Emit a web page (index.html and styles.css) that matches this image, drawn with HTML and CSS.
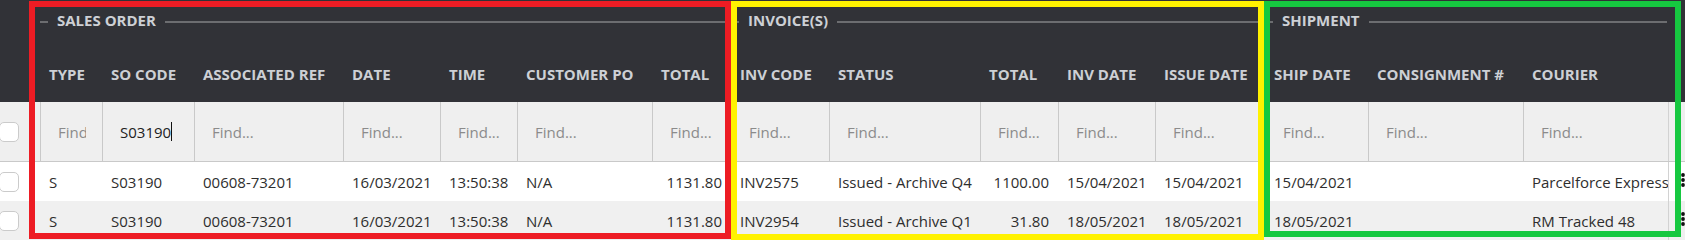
FILE: index.html
```html
<!DOCTYPE html>
<html lang="en">
<head>
<meta charset="utf-8">
<title>Orders grid</title>
<link rel="stylesheet" href="styles.css">
</head>
<body>
<div class="table">
  <div class="head">
    <div class="row groups">
      <div class="group g-sales"><span class="rule-s"></span><span class="gt">SALES ORDER</span><span class="rule"></span></div>
      <div class="group g-inv"><span class="rule-s"></span><span class="gt">INVOICE(S)</span><span class="rule"></span></div>
      <div class="group g-ship"><span class="rule-s"></span><span class="gt">SHIPMENT</span><span class="rule"></span></div>
    </div>
    <div class="row cols">
      <div class="th"></div>
      <div class="th">TYPE</div>
      <div class="th">SO CODE</div>
      <div class="th">ASSOCIATED REF</div>
      <div class="th">DATE</div>
      <div class="th">TIME</div>
      <div class="th">CUSTOMER PO</div>
      <div class="th">TOTAL</div>
      <div class="th">INV CODE</div>
      <div class="th">STATUS</div>
      <div class="th">TOTAL</div>
      <div class="th">INV DATE</div>
      <div class="th">ISSUE DATE</div>
      <div class="th">SHIP DATE</div>
      <div class="th">CONSIGNMENT #</div>
      <div class="th">COURIER</div>
      <div class="th"></div>
    </div>
  </div>
  <div class="row filters">
    <div class="fc first"><span class="chk"></span></div>
    <div class="fc"><input class="find" placeholder="Find..."></div>
    <div class="fc typing"><input class="find" value="S03190"><span class="caret"></span></div>
    <div class="fc"><input class="find" placeholder="Find..."></div>
    <div class="fc"><input class="find" placeholder="Find..."></div>
    <div class="fc"><input class="find" placeholder="Find..."></div>
    <div class="fc"><input class="find" placeholder="Find..."></div>
    <div class="fc"><input class="find" placeholder="Find..."></div>
    <div class="fc"><input class="find" placeholder="Find..."></div>
    <div class="fc"><input class="find" placeholder="Find..."></div>
    <div class="fc"><input class="find" placeholder="Find..."></div>
    <div class="fc"><input class="find" placeholder="Find..."></div>
    <div class="fc"><input class="find" placeholder="Find..."></div>
    <div class="fc"><input class="find" placeholder="Find..."></div>
    <div class="fc"><input class="find" placeholder="Find..."></div>
    <div class="fc"><input class="find" placeholder="Find..."></div>
    <div class="fc act"></div>
  </div>
  <div class="row data">
    <div class="td"><span class="chk"></span></div>
    <div class="td">S</div>
    <div class="td">S03190</div>
    <div class="td">00608-73201</div>
    <div class="td">16/03/2021</div>
    <div class="td">13:50:38</div>
    <div class="td">N/A</div>
    <div class="td num">1131.80</div>
    <div class="td">INV2575</div>
    <div class="td">Issued - Archive Q4</div>
    <div class="td num">1100.00</div>
    <div class="td">15/04/2021</div>
    <div class="td">15/04/2021</div>
    <div class="td">15/04/2021</div>
    <div class="td"></div>
    <div class="td">Parcelforce Express</div>
    <div class="td act"><svg class="dots" width="6" height="14" viewBox="0 0 6 14"><circle cx="3" cy="2" r="1.9"/><circle cx="3" cy="7" r="1.9"/><circle cx="3" cy="12" r="1.9"/></svg></div>
  </div>
  <div class="row data alt">
    <div class="td"><span class="chk"></span></div>
    <div class="td">S</div>
    <div class="td">S03190</div>
    <div class="td">00608-73201</div>
    <div class="td">16/03/2021</div>
    <div class="td">13:50:38</div>
    <div class="td">N/A</div>
    <div class="td num">1131.80</div>
    <div class="td">INV2954</div>
    <div class="td">Issued - Archive Q1</div>
    <div class="td num">31.80</div>
    <div class="td">18/05/2021</div>
    <div class="td">18/05/2021</div>
    <div class="td">18/05/2021</div>
    <div class="td"></div>
    <div class="td">RM Tracked 48</div>
    <div class="td act"><svg class="dots" width="6" height="14" viewBox="0 0 6 14"><circle cx="3" cy="2" r="1.9"/><circle cx="3" cy="7" r="1.9"/><circle cx="3" cy="12" r="1.9"/></svg></div>
  </div>
  <div class="mark red"></div>
  <div class="mark yellow"></div>
  <div class="mark green"></div>
</div>
</body>
</html>
```
FILE: styles.css
```css
html, body {
  margin: 0;
  padding: 0;
  background: #f0f0f0;
}
body {
  font-family: "Open Sans", "Liberation Sans", sans-serif;
  font-size: 15px;
  color: #2e2e2e;
  width: 1685px;
  height: 240px;
  overflow: hidden;
}
.table {
  position: relative;
  width: 1685px;
  height: 240px;
  overflow: hidden;
}
.row {
  display: grid;
  grid-template-columns: 40px 62px 92px 149px 97px 77px 135px 79px 98px 151px 78px 97px 110px 103px 155px 145px 40px;
  width: 1708px;
}
.head {
  background: #313237;
  color: #cdd0d5;
  font-weight: 700;
}
.groups {
  height: 46px;
}
.group {
  display: flex;
  align-items: flex-start;
}
.g-sales { grid-column: 2 / 9; }
.g-inv { grid-column: 9 / 14; }
.g-ship { grid-column: 14 / 17; }
.rule-s, .rule {
  height: 2px;
  margin-top: 21px;
  background: #6c6d70;
}
.rule-s {
  width: 8px;
  flex: none;
}
.rule {
  flex: 1;
  margin-right: 1px;
}
.gt {
  line-height: 20px;
  margin: 10px 9px 0;
  white-space: nowrap;
}
.cols {
  height: 56px;
  align-items: center;
}
.th {
  padding: 0 9px;
  line-height: 20px;
  white-space: nowrap;
  overflow: hidden;
}
.filters {
  height: 59px;
  background: #efefef;
  border-bottom: 1px solid #c9c9c9;
}
.fc {
  display: flex;
  align-items: center;
  border-left: 1px solid #c9c9c9;
  padding: 0 8px 0 9px;
  min-width: 0;
}
.fc.first {
  border-left: none;
  padding: 0;
}
.fc.typing {
  position: relative;
}
.caret {
  position: absolute;
  left: 68px;
  top: 20px;
  width: 1px;
  height: 19px;
  background: #111;
}
.find {
  width: 100%;
  min-width: 0;
  box-sizing: border-box;
  border: none;
  background: transparent;
  font: inherit;
  color: #222;
  padding: 0 8px;
  line-height: 22px;
  height: 24px;
  outline: none;
}
.find::placeholder {
  color: #8b8b8b;
  opacity: 1;
}
.chk {
  display: block;
  width: 20px;
  height: 20px;
  box-sizing: border-box;
  margin-left: -1px;
  border: 1px solid #cbcbcb;
  border-radius: 5px;
  background: #fff;
}
.data {
  height: 39px;
  background: #ffffff;
}
.data.alt {
  background: #f0f0f0;
}
.td {
  display: flex;
  align-items: center;
  padding: 0 9px;
  white-space: nowrap;
  overflow: hidden;
  min-width: 0;
}
.td:first-child {
  padding: 0;
}
.td.num {
  justify-content: flex-end;
}
.act {
  border-left: 1px solid #d2d2d2;
}
.td.act {
  padding: 0 0 0 11px;
  align-items: flex-start;
}
.dots {
  margin-top: 11px;
  fill: #111;
}
.mark {
  position: absolute;
  top: 1px;
  box-sizing: border-box;
  border: 6px solid;
  pointer-events: none;
}
.red {
  left: 29px;
  width: 702px;
  height: 238px;
  border-color: #ed1c24;
}
.yellow {
  left: 731px;
  width: 533px;
  height: 239px;
  border-color: #fff200;
}
.green {
  left: 1264px;
  width: 417px;
  height: 236px;
  border-color: #16c840;
}
```
